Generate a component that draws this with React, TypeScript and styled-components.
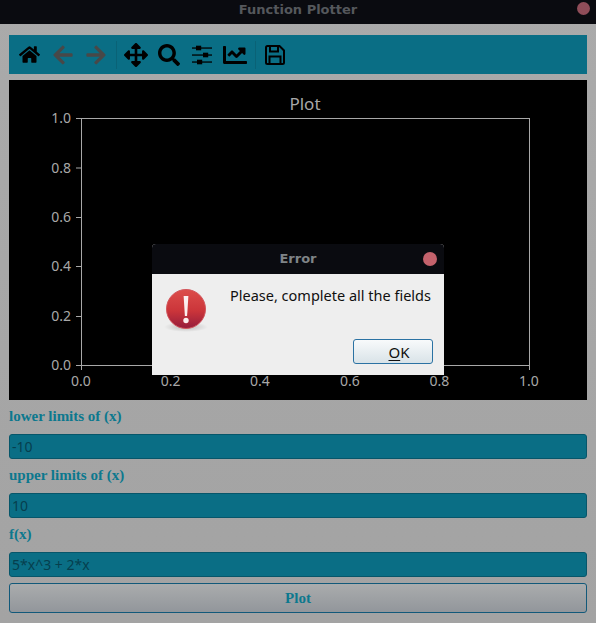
import { createGlobalStyle, styled } from 'styled-components'
import { FaArrowLeft, FaArrowRight, FaArrowsAlt, FaChartLine, FaHome, FaSearch } from 'react-icons/fa'

const GlobalStyle = createGlobalStyle`
  html, body {
    margin: 0;
    padding: 0;
    background: #a6a6a6;
  }
`

const Window = styled.div`
  position: relative;
  width: 596px;
  height: 623px;
  overflow: hidden;
  display: flex;
  flex-direction: column;
  background: linear-gradient(#aaaaaa, #a3a3a3);
  font-family: 'Noto Sans', sans-serif;
`

const TitleBar = styled.div<{ $tall?: boolean }>`
  position: relative;
  flex: none;
  box-sizing: border-box;
  height: ${(p) => (p.$tall ? 30 : 24)}px;
  padding-bottom: ${(p) => (p.$tall ? 2 : 6)}px;
  display: flex;
  align-items: center;
  justify-content: center;
  background: #0a0b10;
  font-family: 'DejaVu Sans', sans-serif;
  font-size: 13px;
  font-weight: 700;
  color: ${(p) => (p.$tall ? '#7f8487' : '#55585c')};
`

const CloseDot = styled.span<{ $dialog?: boolean }>`
  position: absolute;
  top: ${(p) => (p.$dialog ? 8 : 2)}px;
  right: ${(p) => (p.$dialog ? 7 : 6)}px;
  width: ${(p) => (p.$dialog ? 14 : 13)}px;
  height: ${(p) => (p.$dialog ? 14 : 13)}px;
  border-radius: 50%;
  background: ${(p) => (p.$dialog ? '#c4626c' : '#8f4d59')};
`

const Content = styled.div`
  flex: 1;
  display: flex;
  flex-direction: column;
  padding: 11px 9px 0;
`

const Toolbar = styled.div`
  flex: none;
  height: 39px;
  display: flex;
  align-items: center;
  padding-left: 4px;
  background: #0a6e85;
  margin-bottom: 6px;
`

const ToolButton = styled.span<{ $off?: boolean }>`
  flex: none;
  width: 33px;
  display: flex;
  align-items: center;
  justify-content: center;
  color: ${(p) => (p.$off ? '#484848' : '#000')};
`

const ToolSeparator = styled.span`
  flex: none;
  width: 1px;
  height: 28px;
  margin: 0 2px 0 4px;
  background: #0a6276;
`

const Canvas = styled.div`
  flex: none;
  height: 320px;
  background: #000;
`

const PlotSvg = styled.svg`
  display: block;
  font-family: 'Noto Sans', sans-serif;
  font-size: 14px;
`

const FieldLabel = styled.label`
  display: block;
  height: 34px;
  line-height: 33px;
  font-family: 'Liberation Serif', serif;
  font-size: 15px;
  font-weight: 700;
  color: #0c788e;
`

const FieldInput = styled.div`
  box-sizing: border-box;
  height: 25px;
  line-height: 24px;
  padding-left: 2px;
  border: 1px solid #07566a;
  border-radius: 3px;
  background: #0a6e85;
  font-size: 14px;
  color: #063f4e;
`

const PlotButton = styled.div`
  box-sizing: border-box;
  height: 30px;
  margin-top: 6px;
  display: flex;
  align-items: center;
  justify-content: center;
  border: 1px solid #12597a;
  border-radius: 3px;
  background: linear-gradient(#aaacad, #92969b);
  font-family: 'Liberation Serif', serif;
  font-size: 15px;
  font-weight: 700;
  color: #0c788e;
`

const Dialog = styled.div`
  position: absolute;
  left: 152px;
  top: 244px;
  width: 292px;
  height: 131px;
  display: flex;
  flex-direction: column;
  background: #eeeeee;
  border-radius: 4px 4px 0 0;
  overflow: hidden;
`

const DialogBody = styled.div`
  flex: 1;
  display: grid;
  grid-template-columns: 78px 1fr;
  padding: 11px 11px 11px 0;
`

const DialogIcon = styled.svg`
  display: block;
  margin: 4px 0 0 12px;
`

const DialogMain = styled.div`
  display: flex;
  flex-direction: column;
  justify-content: space-between;
  align-items: flex-end;
`

const Message = styled.div`
  align-self: flex-start;
  font-size: 14.5px;
  line-height: 20px;
  white-space: nowrap;
  color: #101010;
`

const OkButton = styled.div`
  box-sizing: border-box;
  width: 80px;
  height: 25px;
  padding-left: 12px;
  display: flex;
  align-items: center;
  justify-content: center;
  border: 1px solid #2b72a3;
  border-radius: 3px;
  background: linear-gradient(#f8fafb, #d9e3e8);
  font-size: 15px;
  color: #101010;

  u {
    text-underline-offset: 2px;
  }
`

const SlidersIcon = () => (
  <svg width='20' height='20' viewBox='0 0 20 20' fill='#000'>
    <rect x='0' y='2.4' width='20' height='1.3' />
    <rect x='0' y='9.4' width='20' height='1.3' />
    <rect x='0' y='16.4' width='20' height='1.3' />
    <rect x='4' y='0.7' width='5.2' height='4.6' />
    <rect x='11' y='7.7' width='5.2' height='4.6' />
    <rect x='5' y='14.7' width='5.2' height='4.6' />
  </svg>
)

const SaveIcon = () => (
  <svg width='20' height='20' viewBox='0 0 20 20' fill='none' stroke='#000' strokeWidth='2'>
    <path d='M2.5 1h12L19 5.5v12a1.5 1.5 0 0 1-1.5 1.5h-15A1.5 1.5 0 0 1 1 17.5v-15A1.5 1.5 0 0 1 2.5 1z' />
    <path d='M5 1.5v5h8v-5' />
    <path d='M4.5 19v-7.5h11V19' />
  </svg>
)

const xTicks = [72, 161.6, 251, 341, 430.4, 520]
const yTicks = [38, 87.5, 137, 186, 236, 285]
const tickLabels = ['0.0', '0.2', '0.4', '0.6', '0.8', '1.0']

const Plot = () => (
  <PlotSvg width='578' height='320' viewBox='0 0 578 320'>
    <text x='296' y='30' textAnchor='middle' fontSize='17' fill='#a8a8a8'>
      Plot
    </text>
    <rect x='72.5' y='38.5' width='448' height='247' fill='none' stroke='#a8a8a8' />
    {xTicks.map((x, i) => (
      <g key={x}>
        <line x1={x + 0.5} x2={x + 0.5} y1='285' y2='290' stroke='#a8a8a8' />
        <text x={x} y='306' textAnchor='middle' fill='#a8a8a8'>
          {tickLabels[i]}
        </text>
      </g>
    ))}
    {yTicks.map((y, i) => (
      <g key={y}>
        <line x1='67' x2='72' y1={y + 0.5} y2={y + 0.5} stroke='#a8a8a8' />
        <text x='62' y={y + 5} textAnchor='end' fill='#a8a8a8'>
          {tickLabels[5 - i]}
        </text>
      </g>
    ))}
  </PlotSvg>
)

const ErrorIcon = () => (
  <DialogIcon width='44' height='44' viewBox='0 0 44 44'>
    <defs>
      <linearGradient id='ball' x1='0' y1='0' x2='0' y2='1'>
        <stop offset='0' stopColor='#dc4d4a' />
        <stop offset='0.55' stopColor='#cb353a' />
        <stop offset='1' stopColor='#951c3c' />
      </linearGradient>
      <radialGradient id='shade'>
        <stop offset='0' stopColor='#000' stopOpacity='0.22' />
        <stop offset='1' stopColor='#000' stopOpacity='0' />
      </radialGradient>
    </defs>
    <ellipse cx='22' cy='38' rx='22' ry='5' fill='url(#shade)' />
    <circle cx='22' cy='20' r='19.5' fill='url(#ball)' stroke='#d2565c' />
    <path d='M19.6 7h4.8l-1.3 20h-2.2z' fill='#fbeeee' />
    <circle cx='22' cy='31.5' r='2.7' fill='#fbeeee' />
  </DialogIcon>
)

export default function App() {
  return (
    <Window>
      <GlobalStyle />
      <TitleBar>
        Function Plotter
        <CloseDot />
      </TitleBar>
      <Content>
        <Toolbar>
          <ToolButton><FaHome size={21} /></ToolButton>
          <ToolButton $off><FaArrowLeft size={22} /></ToolButton>
          <ToolButton $off><FaArrowRight size={22} /></ToolButton>
          <ToolSeparator />
          <ToolButton><FaArrowsAlt size={24} /></ToolButton>
          <ToolButton><FaSearch size={22} /></ToolButton>
          <ToolButton><SlidersIcon /></ToolButton>
          <ToolButton><FaChartLine size={24} /></ToolButton>
          <ToolSeparator />
          <ToolButton><SaveIcon /></ToolButton>
        </Toolbar>
        <Canvas>
          <Plot />
        </Canvas>
        <FieldLabel>lower limits of (x)</FieldLabel>
        <FieldInput>-10</FieldInput>
        <FieldLabel>upper limits of (x)</FieldLabel>
        <FieldInput>10</FieldInput>
        <FieldLabel>f(x)</FieldLabel>
        <FieldInput>5*x^3 + 2*x</FieldInput>
        <PlotButton>Plot</PlotButton>
      </Content>
      <Dialog>
        <TitleBar $tall>
          Error
          <CloseDot $dialog />
        </TitleBar>
        <DialogBody>
          <ErrorIcon />
          <DialogMain>
            <Message>Please, complete all the fields</Message>
            <OkButton><span><u>O</u>K</span></OkButton>
          </DialogMain>
        </DialogBody>
      </Dialog>
    </Window>
  )
}
